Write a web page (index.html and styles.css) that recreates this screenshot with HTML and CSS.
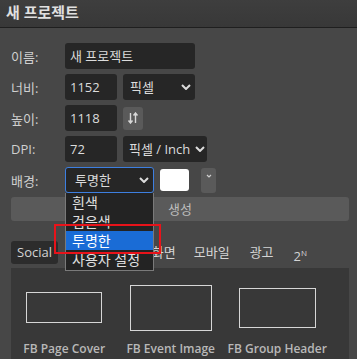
FILE: index.html
```html
<!DOCTYPE html>
<html>
<head>
	<title>새 프로젝트</title>
	<link rel="stylesheet" href="styles.css">
</head>
<body>
	<div class="dialog">
		<div class="titlebar">새 프로젝트</div>

		<div class="form">
			<div class="row">
				<label class="lbl">이름:</label>
				<div class="field name">새 프로젝트</div>
			</div>
			<div class="row">
				<label class="lbl">너비:</label>
				<div class="field num">1152</div>
				<div class="field select unit">픽셀<svg class="chev" viewBox="0 0 10 6" width="10" height="6"><path d="M1 1 L5 5 L9 1" /></svg></div>
			</div>
			<div class="row">
				<label class="lbl">높이:</label>
				<div class="field num">1118</div>
				<div class="swap">
					<svg viewBox="0 0 12 12" width="12" height="12"><path d="M3.5 1 V11 M1.5 8.5 L3.5 11 L5.5 8.5 M8.5 11 V1 M6.5 3.5 L8.5 1 L10.5 3.5" /></svg>
				</div>
			</div>
			<div class="row">
				<label class="lbl">DPI:</label>
				<div class="field num">72</div>
				<div class="field select dpi">픽셀 / Inch<svg class="chev" viewBox="0 0 10 6" width="10" height="6"><path d="M1 1 L5 5 L9 1" /></svg></div>
			</div>
			<div class="row">
				<label class="lbl">배경:</label>
				<div class="field select bg focus">투명한<svg class="chev" viewBox="0 0 10 6" width="10" height="6"><path d="M1 1 L5 5 L9 1" /></svg></div>
				<div class="swatch"></div>
				<div class="mini">
					<svg viewBox="0 0 6 4" width="6" height="4"><path d="M1 1 L3 3 L5 1" /></svg>
				</div>
			</div>

			<div class="create">생성</div>

			<div class="tabs">
				<span class="tab active">Social</span>
				<span class="tab tight">인쇄</span>
				<span class="tab">사진</span>
				<span class="tab">화면</span>
				<span class="tab">모바일</span>
				<span class="tab wide">광고</span>
				<span class="tab">2<sup>N</sup></span>
			</div>

			<div class="presets">
				<div class="preset">
					<div class="thumb"><div class="frame f1"></div></div>
					<div class="cap">FB Page Cover</div>
				</div>
				<div class="preset">
					<div class="thumb"><div class="frame f2"></div></div>
					<div class="cap">FB Event Image</div>
				</div>
				<div class="preset">
					<div class="thumb"><div class="frame f3"></div></div>
					<div class="cap">FB Group Header</div>
				</div>
			</div>
		</div>

		<ul class="options">
			<li>흰색</li>
			<li>검은색</li>
			<li class="picked">투명한</li>
			<li>사용자 설정</li>
		</ul>
		<div class="mark"></div>
	</div>
</body>
</html>
```

FILE: styles.css
```css
body {
	margin: 0;
	background: #474747;
	font-family: "Open Sans", "Noto Sans CJK KR", sans-serif;
	font-size: 13px;
	color: #d4d4d4;
}
.dialog {
	position: relative;
	height: 359px;
	overflow: hidden;
}
.titlebar {
	height: 27px;
	line-height: 24px;
	padding-left: 6px;
	font-size: 15px;
	font-weight: bold;
	color: #e0e0e0;
	background: linear-gradient(#3e3e3e, #383838);
	border-bottom: 1px solid #1f1f1f;
}
.form { padding: 15px 8px 0 11px; }
.row {
	display: flex;
	align-items: center;
	height: 26px;
	margin-bottom: 5px;
}
.row:nth-child(5) { margin-bottom: 0; }
.lbl {
	width: 54px;
	color: #d0d0d0;
}
.field {
	box-sizing: border-box;
	height: 26px;
	line-height: 26px;
	padding-left: 5px;
	background: #262626;
	border-radius: 3px;
	color: #dcdcdc;
}
.name { width: 130px; }
.num { width: 52px; }
.select {
	display: flex;
	align-items: center;
	margin-left: 6px;
	padding-right: 4px;
}
.select .chev {
	margin-left: auto;
	fill: none;
	stroke: #dcdcdc;
	stroke-width: 2;
}
.unit { width: 72px; padding-left: 7px; }
.dpi { width: 84px; padding-left: 6px; padding-right: 2px; }
.bg {
	width: 89px;
	margin-left: 0;
	padding-left: 9px;
	border: 1px solid #3d7fe0;
}
.swap {
	display: flex;
	align-items: center;
	justify-content: center;
	width: 20px;
	height: 23px;
	margin-left: 6px;
	background: #5a5a5a;
	border-radius: 3px;
}
.swap svg {
	fill: none;
	stroke: #d8d8d8;
	stroke-width: 1.4;
}
.swatch {
	width: 29px;
	height: 22px;
	margin-left: 6px;
	background: #fff;
	border-radius: 3px;
}
.mini {
	display: flex;
	justify-content: center;
	padding-top: 6px;
	box-sizing: border-box;
	width: 15px;
	height: 25px;
	margin-left: 12px;
	background: #5a5a5a;
	border-radius: 3px;
}
.mini svg {
	fill: none;
	stroke: #cfcfcf;
	stroke-width: 1.2;
}
.create {
	height: 24px;
	line-height: 24px;
	margin-top: 4px;
	text-align: center;
	background: #5a5a5a;
	border-radius: 3px;
	color: #bdbdbd;
}
.tabs {
	display: flex;
	gap: 6px;
	margin-top: 20px;
	height: 23px;
}
.tab {
	padding: 0 6px;
	line-height: 23px;
	border-radius: 3px;
	color: #d4d4d4;
}
.tab.tight { margin-left: -2px; }
.tab.wide { margin-left: 2px; padding-right: 8px; }
.tab.active { background: #2c2c2c; }
.tab sup { font-size: 8px; vertical-align: 5px; }
.presets {
	display: grid;
	grid-template-columns: repeat(3, 106.5px);
	margin-top: 4px;
	height: 100px;
	background: #383838;
}
.preset {
	padding-top: 8px;
	text-align: center;
}
.thumb {
	display: flex;
	align-items: center;
	justify-content: center;
	height: 63px;
}
.frame {
	box-sizing: border-box;
	border: 1px solid #d6d6d6;
}
.f1 { width: 76px; height: 31px; }
.f2 { width: 82px; height: 46px; }
.f3 { width: 77px; height: 40px; }
.cap {
	margin-top: 1px;
	font-size: 12px;
	font-weight: 600;
	line-height: 18px;
	color: #b8b8b8;
	white-space: nowrap;
}
.options {
	position: absolute;
	left: 65px;
	top: 193px;
	width: 89px;
	box-sizing: border-box;
	margin: 0;
	padding: 0;
	list-style: none;
	background: #232323;
	border: 1px solid #7a7a7a;
	border-top: none;
	font-size: 14px;
}
.options li {
	height: 19px;
	line-height: 19px;
	padding-left: 6px;
	color: #e0e0e0;
}
.options li:last-child { height: 20px; }
.options li.picked {
	background: #1a6cd6;
	color: #fff;
}
.mark {
	position: absolute;
	left: 54px;
	top: 224px;
	width: 107px;
	height: 30px;
	box-sizing: border-box;
	border: 2px solid #e8131a;
}
```
